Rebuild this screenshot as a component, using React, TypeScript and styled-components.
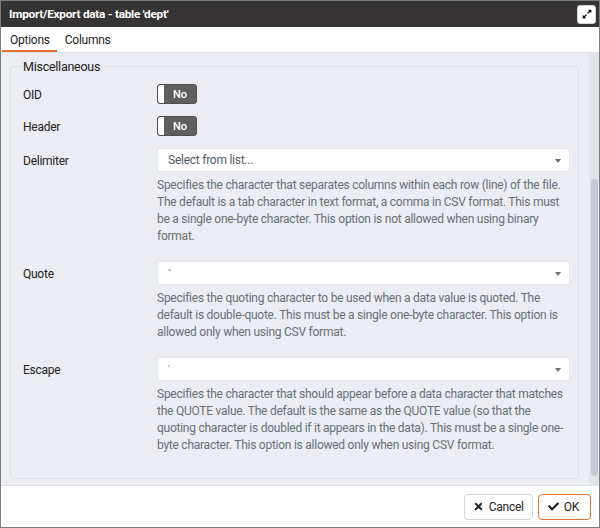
import React, { useState } from "react";
import styled, { createGlobalStyle } from "styled-components";
import { FaExpandAlt, FaTimes, FaCheck } from "react-icons/fa";

const GlobalStyle = createGlobalStyle`
  html, body {
    margin: 0;
    padding: 0;
    background: #ffffff;
  }
  * {
    box-sizing: border-box;
  }
`;

const Dialog = styled.div`
  width: 600px;
  height: 528px;
  display: flex;
  flex-flow: column nowrap;
  border: 1px solid #7d7d7d;
  font-family: Roboto, "Liberation Sans", sans-serif;
  font-size: 12px;
  letter-spacing: -0.25px;
  color: #222222;
  overflow: hidden;
`;

const TitleBar = styled.div`
  height: 26px;
  flex: none;
  display: flex;
  align-items: center;
  justify-content: space-between;
  padding: 0 3px 0 8px;
  background: #363334;
  color: #ffffff;
  font-size: 11.8px;
  font-weight: 700;
  letter-spacing: -0.25px;
`;

const MaxButton = styled.button`
  width: 19px;
  height: 19px;
  padding: 0;
  display: flex;
  align-items: center;
  justify-content: center;
  background: #ffffff;
  border: 1px solid #cfd3da;
  border-radius: 3px;
  color: #111111;
  font-size: 10px;
`;

const Tabs = styled.div`
  height: 26px;
  flex: none;
  display: flex;
  align-items: stretch;
  padding-left: 1px;
  background: #ffffff;
  border-bottom: 1px solid #dde0e6;
`;

const Tab = styled.div<{ $active?: boolean }>`
  display: flex;
  align-items: center;
  padding: 2px 7px 0 8px;
  color: #222222;
  border-bottom: 2px solid ${(p) => (p.$active ? "#e6712e" : "transparent")};
`;

const Body = styled.div`
  flex: 1;
  min-height: 0;
  display: flex;
  background: #ebedf2;
`;

const Content = styled.div`
  flex: 1;
  padding: 6px 10px 7px 9px;
`;

const Scrollbar = styled.div`
  width: 10px;
  flex: none;
  display: flex;
  flex-flow: column nowrap;
  justify-content: flex-end;
  padding: 0 1px 9px 2px;
  background: #e1e4ea;
`;

const Thumb = styled.div`
  height: 297px;
  border-radius: 4px;
  background: #c5c9d1;
`;

const Fieldset = styled.fieldset`
  margin: 0;
  padding: 10px 8px 24px 12px;
  border: 1px solid #dcdfe5;
  border-radius: 4px;
  min-width: 0;
`;

const Legend = styled.legend`
  padding: 0 4px 0 0;
  margin-left: 0;
  font-size: 12.5px;
  color: #222222;
`;

const Row = styled.div<{ $gap?: number }>`
  display: grid;
  grid-template-columns: 134px 1fr;
  margin-bottom: ${(p) => p.$gap ?? 12}px;
`;

const Label = styled.div<{ $h: number }>`
  height: ${(p) => p.$h}px;
  display: flex;
  align-items: center;
  padding-top: 1px;
  font-size: 12px;
  color: #222222;
`;

const Control = styled.div`
  display: flex;
  flex-flow: column nowrap;
`;

const Toggle = styled.div`
  width: 40px;
  height: 20px;
  display: flex;
  border: 1px solid #505050;
  border-radius: 3px;
  overflow: hidden;
  background: #5f5f5f;
`;

const Knob = styled.div`
  width: 6px;
  background: #ffffff;
  border-radius: 2px 0 0 2px;
`;

const ToggleText = styled.div`
  flex: 1;
  display: flex;
  align-items: center;
  justify-content: center;
  color: #ffffff;
  font-size: 11px;
  font-weight: 500;
  letter-spacing: 0;
`;

const Select = styled.div`
  height: 24px;
  display: flex;
  align-items: center;
  justify-content: space-between;
  padding: 0 8px 0 10px;
  background: #ffffff;
  border: 1px solid #e3e6eb;
  border-radius: 3px;
  font-size: 12px;
  color: #555a62;
`;

const Caret = styled.span`
  width: 0;
  height: 0;
  margin-top: 1px;
  border-left: 3px solid transparent;
  border-right: 3px solid transparent;
  border-top: 4px solid #6a6e74;
`;

const SmallValue = styled.span`
  font-size: 9px;
  color: #777777;
`;

const Help = styled.div`
  margin-top: 5px;
  font-size: 12px;
  line-height: 17px;
  color: #6a6f78;
`;

const Footer = styled.div`
  height: 42px;
  flex: none;
  display: flex;
  align-items: center;
  justify-content: flex-end;
  gap: 5px;
  padding: 0 8px 0 0;
  background: #ffffff;
  border-top: 1px solid #dde0e6;
`;

const Button = styled.button<{ $primary?: boolean }>`
  height: 26px;
  display: flex;
  align-items: center;
  gap: 5px;
  padding: 0 ${(p) => (p.$primary ? 11 : 8)}px 0 ${(p) => (p.$primary ? 9 : 8)}px;
  background: #ffffff;
  border: 1px solid ${(p) => (p.$primary ? "#e6712e" : "#cfd3da")};
  border-radius: 4px;
  font-family: Roboto, "Liberation Sans", sans-serif;
  font-size: 12px;
  letter-spacing: -0.25px;
  color: #222222;
  svg {
    font-size: 11px;
  }
`;

const fields = [
  {
    label: "Delimiter",
    value: "Select from list...",
    placeholder: true,
    help: "Specifies the character that separates columns within each row (line) of the file. The default is a tab character in text format, a comma in CSV format. This must be a single one-byte character. This option is not allowed when using binary format.",
  },
  {
    label: "Quote",
    value: "\"",
    help: "Specifies the quoting character to be used when a data value is quoted. The default is double-quote. This must be a single one-byte character. This option is allowed only when using CSV format.",
  },
  {
    label: "Escape",
    value: "'",
    help: "Specifies the character that should appear before a data character that matches the QUOTE value. The default is the same as the QUOTE value (so that the quoting character is doubled if it appears in the data). This must be a single one-byte character. This option is allowed only when using CSV format.",
  },
];

const App = () => {
  const [tab, setTab] = useState("Options");

  return (
    <>
      <GlobalStyle />
      <Dialog>
        <TitleBar>
          <span>Import/Export data - table 'dept'</span>
          <MaxButton>
            <FaExpandAlt />
          </MaxButton>
        </TitleBar>
        <Tabs>
          {["Options", "Columns"].map((t) => (
            <Tab key={t} $active={tab === t} onClick={() => setTab(t)}>
              {t}
            </Tab>
          ))}
        </Tabs>
        <Body>
          <Content>
            <Fieldset>
              <Legend>Miscellaneous</Legend>
              {["OID", "Header"].map((name) => (
                <Row key={name}>
                  <Label $h={20}>{name}</Label>
                  <Control>
                    <Toggle>
                      <Knob />
                      <ToggleText>No</ToggleText>
                    </Toggle>
                  </Control>
                </Row>
              ))}
              {fields.map((f, i) => (
                <Row key={f.label} $gap={i === fields.length - 1 ? 0 : 16}>
                  <Label $h={24}>{f.label}</Label>
                  <Control>
                    <Select>
                      {f.placeholder ? (
                        <span>{f.value}</span>
                      ) : (
                        <SmallValue>{f.value}</SmallValue>
                      )}
                      <Caret />
                    </Select>
                    <Help>{f.help}</Help>
                  </Control>
                </Row>
              ))}
            </Fieldset>
          </Content>
          <Scrollbar>
            <Thumb />
          </Scrollbar>
        </Body>
        <Footer>
          <Button>
            <FaTimes />
            Cancel
          </Button>
          <Button $primary>
            <FaCheck />
            OK
          </Button>
        </Footer>
      </Dialog>
    </>
  );
};

export default App;
